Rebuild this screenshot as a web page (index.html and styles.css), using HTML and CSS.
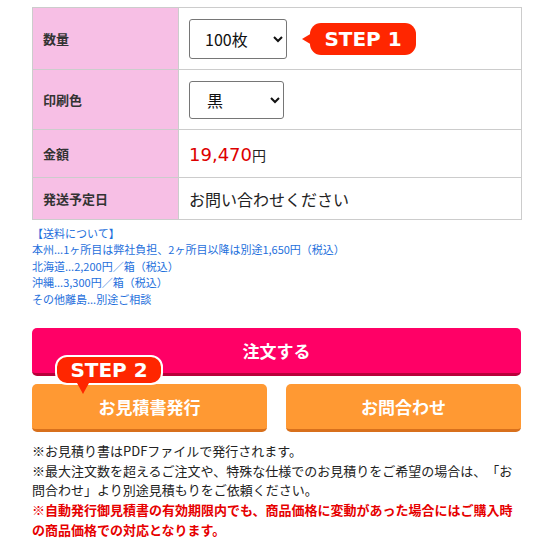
FILE: index.html
```html
<!DOCTYPE html>
<html lang="ja">
<head>
    <meta charset="UTF-8">
    <meta name="viewport" content="width=device-width, initial-scale=1.0">
    <title>お見積り</title>
    <link rel="stylesheet" href="styles.css">
</head>
<body>
    <div class="wrap">
        <table class="spec">
            <tr class="row-qty">
                <th>数量</th>
                <td>
                    <div class="step-line">
                        <select class="sel sel-qty">
                            <option>100枚</option>
                            <option>200枚</option>
                            <option>300枚</option>
                        </select>
                        <span class="step step-left">STEP 1</span>
                    </div>
                </td>
            </tr>
            <tr class="row-color">
                <th>印刷色</th>
                <td>
                    <select class="sel sel-color">
                        <option>黒</option>
                        <option>赤</option>
                    </select>
                </td>
            </tr>
            <tr class="row-price">
                <th>金額</th>
                <td><span class="price">19,470</span><span class="yen">円</span></td>
            </tr>
            <tr class="row-ship">
                <th>発送予定日</th>
                <td class="ship-date">お問い合わせください</td>
            </tr>
        </table>

        <div class="postage">
            <p>【送料について】</p>
            <p>本州...1ヶ所目は弊社負担、2ヶ所目以降は別途1,650円（税込）</p>
            <p>北海道...2,200円／箱（税込）</p>
            <p>沖縄...3,300円／箱（税込）</p>
            <p>その他離島...別途ご相談</p>
        </div>

        <div class="actions">
            <button class="btn btn-order">注文する</button>
            <div class="btn-row">
                <div class="btn-hold">
                    <span class="step step-down">STEP 2</span>
                    <button class="btn btn-sub">お見積書発行</button>
                </div>
                <div class="btn-hold">
                    <button class="btn btn-sub">お問合わせ</button>
                </div>
            </div>
        </div>

        <div class="notes">
            <p>※お見積り書はPDFファイルで発行されます。</p>
            <p>※最大注文数を超えるご注文や、特殊な仕様でのお見積りをご希望の場合は、「お問合わせ」より別途見積もりをご依頼ください。</p>
            <p class="warn">※自動発行御見積書の有効期限内でも、商品価格に変動があった場合にはご購入時の商品価格での対応となります。</p>
        </div>
    </div>
</body>
</html>
```

FILE: styles.css
```css
body {
    margin: 0;
    background-color: #fff;
    font-family: "Noto Sans CJK JP", "Noto Sans", sans-serif;
    color: #222;
    text-spacing-trim: space-all;
}
p {
    margin: 0;
}
.wrap {
    width: 489px;
    padding: 7px 0 0 32px;
}
.spec {
    width: 490px;
    border-collapse: collapse;
}
.spec th,
.spec td {
    border: 1px solid #cccccc;
    padding: 0 0 0 10px;
    vertical-align: middle;
}
.spec th {
    width: 135px;
    background-color: #f7bfe5;
    text-align: left;
    font-size: 13px;
    font-weight: bold;
    color: #333;
}
.row-qty { height: 62px; }
.row-color { height: 60px; }
.row-price { height: 48px; }
.row-ship { height: 42px; }
.step-line {
    display: flex;
    align-items: center;
}
.sel {
    font-family: "Noto Sans CJK JP", "Liberation Sans", sans-serif;
    font-size: 16px;
    color: #111;
    background-color: #fff;
    border: 1px solid #767676;
    border-radius: 3px;
    padding: 0 0 0 11px;
}
.sel-qty {
    width: 98px;
    height: 40px;
}
.sel-color {
    width: 95px;
    height: 38px;
    padding-left: 13px;
}
.step {
    position: relative;
    display: inline-block;
    background-color: #ff2600;
    color: #fff;
    font-family: "DejaVu Sans", sans-serif;
    font-weight: bold;
    font-size: 20px;
    line-height: 32px;
    border-radius: 11px;
    text-align: center;
}
.step-left {
    width: 106px;
    margin-left: 23px;
}
.step-left::before {
    content: "";
    position: absolute;
    left: -8px;
    top: 10px;
    border-style: solid;
    border-width: 6px 10px 6px 0;
    border-color: transparent #ff2600 transparent transparent;
}
.price {
    font-family: "DejaVu Sans", "Liberation Sans", sans-serif;
    font-size: 18px;
    color: #dd0000;
}
.yen {
    font-size: 14px;
    color: #222;
}
.ship-date {
    font-size: 16px;
    color: #222;
}
.postage {
    margin-top: 5px;
    font-size: 11px;
    line-height: 16.4px;
    color: #1e6fdc;
}
.actions {
    margin-top: 21px;
    display: flex;
    flex-direction: column;
    gap: 8px;
}
.btn {
    display: block;
    width: 100%;
    border: 0;
    border-radius: 5px;
    color: #fff;
    font-family: "Noto Sans CJK JP", sans-serif;
    font-weight: bold;
    font-size: 17px;
    height: 48px;
    cursor: pointer;
}
.btn-order {
    background-color: #ff0066;
    border-bottom: 3px solid #b8003a;
}
.btn-row {
    display: flex;
    gap: 19px;
}
.btn-hold {
    position: relative;
    flex: 1;
}
.btn-sub {
    background-color: #ff9933;
    border-bottom: 3px solid #d8701c;
}
.step-down {
    position: absolute;
    left: 23px;
    top: -29px;
    width: 104px;
    line-height: 26px;
    border: 2px solid #fff;
    border-radius: 12px;
    z-index: 1;
}
.step-down::after {
    content: "";
    position: absolute;
    left: 20px;
    bottom: -11px;
    border-style: solid;
    border-width: 11px 6px 0 6px;
    border-color: #ff2600 transparent transparent transparent;
}
.notes {
    margin-top: 9px;
    font-size: 13px;
    line-height: 19.7px;
    color: #222;
}
.warn {
    color: #e60000;
    font-weight: bold;
}
```
